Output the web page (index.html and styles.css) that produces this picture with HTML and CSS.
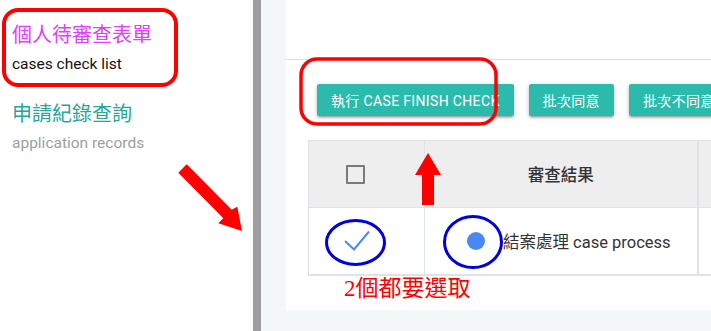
FILE: index.html
```html
<!DOCTYPE html>
<html>
  <head>
    <meta charset="UTF-8">
    <title>個人待審查表單</title>
    <link rel="stylesheet" href="styles.css">
  </head>
  <body>
    <div class="sidebar">
      <div class="nav-item active">
        <div class="nav-title">個人待審查表單</div>
        <div class="nav-sub">cases check list</div>
      </div>
      <div class="nav-item">
        <div class="nav-title">申請紀錄查詢</div>
        <div class="nav-sub">application records</div>
      </div>
    </div>

    <div class="divider"></div>

    <div class="content">
      <div class="card">
        <div class="card-top"></div>

        <div class="toolbar">
          <button class="btn">執行 CASE FINISH CHECK</button>
          <button class="btn">批次同意</button>
          <button class="btn">批次不同意</button>
        </div>

        <table class="table">
          <colgroup>
            <col class="col-check">
            <col class="col-result">
            <col class="col-more">
          </colgroup>
          <thead>
            <tr>
              <th class="cell-check"><span class="checkbox"></span></th>
              <th class="cell-result">審查結果</th>
              <th></th>
            </tr>
          </thead>
          <tbody>
            <tr>
              <td class="cell-check">
                <svg class="check" width="26" height="22" viewBox="0 0 26 22">
                  <polyline points="1,11 10,19.5 25,1.5" />
                </svg>
              </td>
              <td class="cell-result">
                <div class="radio-row">
                  <span class="radio-dot"></span>
                  <span>結案處理 case process</span>
                </div>
              </td>
              <td></td>
            </tr>
          </tbody>
        </table>
      </div>
    </div>

    <!-- annotations drawn over the screenshot -->
    <svg class="marks" width="711" height="331" viewBox="0 0 711 331">
      <rect x="4" y="10" width="172" height="75" rx="14" class="red-line" stroke-width="4" />
      <rect x="301" y="59" width="195" height="65" rx="16" class="red-line" stroke-width="3.5" />
      <ellipse cx="355.5" cy="242.5" rx="29" ry="22" class="blue-line" />
      <ellipse cx="473" cy="242" rx="28.5" ry="25.5" class="blue-line" />
      <polygon class="red-fill" points="428,153 441,175 434,175 434,205 422,205 422,175 415,175" />
      <polygon class="red-fill" points="178.3,172.7 186.7,164.3 231.7,209.8 237.3,206.7 242,231 218.3,223.3 223.3,218.2" />
    </svg>
    <div class="note">2個都要選取</div>
  </body>
</html>
```

FILE: styles.css
```css
:root {
  --teal: #2bbbad;
  --teal-dark: #26a69a;
  --pink: #e040fb;
  --text-color: #333333;
  --border-color: #dfe3e8;
  --bg-color: #f4f7f8;
}

body {
  margin: 0;
  width: 711px;
  height: 331px;
  display: flex;
  overflow: hidden;
  position: relative;
  font-family: Roboto, "Noto Sans CJK TC", sans-serif;
  color: var(--text-color);
  background: #ffffff;
}

.sidebar {
  width: 253px;
  flex-shrink: 0;
  padding: 22px 0 0 12px;
  box-sizing: border-box;
  background: #ffffff;
}

.nav-item {
  margin-bottom: 27px;
}

.nav-title {
  font-size: 20px;
  line-height: 26px;
  color: var(--teal-dark);
}

.nav-sub {
  font-size: 15.5px;
  line-height: 20px;
  margin-top: 6px;
  color: #9e9e9e;
}

.nav-item.active .nav-title {
  color: var(--pink);
}

.nav-item.active .nav-sub {
  color: #111111;
}

.divider {
  width: 8px;
  flex-shrink: 0;
  background: #9e9e9e;
}

.content {
  flex: 1;
  min-width: 0;
  background: var(--bg-color);
  padding: 0 0 21px 25px;
}

.card {
  height: 310px;
  background: #ffffff;
  overflow: hidden;
}

.card-top {
  height: 59px;
  border-bottom: 1px solid #e0e0e0;
}

.toolbar {
  display: flex;
  gap: 15px;
  padding: 24px 0 0 31px;
  white-space: nowrap;
}

.btn {
  flex-shrink: 0;
  height: 32px;
  padding: 0 14px;
  border: none;
  border-radius: 2px;
  background: var(--teal);
  color: #ffffff;
  font-family: Roboto, "Noto Sans CJK TC", sans-serif;
  font-size: 14px;
  letter-spacing: 0.35px;
  box-shadow: 0 2px 2px rgba(0, 0, 0, 0.14), 0 3px 1px -2px rgba(0, 0, 0, 0.12), 0 1px 5px rgba(0, 0, 0, 0.2);
}

.table {
  margin: 24px 0 0 22px;
  border-collapse: collapse;
  table-layout: fixed;
  width: 600px;
}

.col-check {
  width: 116px;
}

.col-result {
  width: 273px;
}

.col-more {
  width: 211px;
}

.table th,
.table td {
  border: 1px solid var(--border-color);
  padding: 0;
}

.table thead tr {
  height: 67px;
  background: #eeeeee;
}

.table tbody tr {
  height: 67px;
  border-bottom: 2px solid var(--border-color);
}

.table th {
  font-size: 16.5px;
  font-weight: 500;
  color: #333333;
}

.cell-result {
  border-right-width: 2px !important;
}

th.cell-check {
  text-align: left;
  padding-left: 37px;
}

.checkbox {
  display: block;
  width: 15px;
  height: 15px;
  border: 2px solid #7a7a7a;
  border-radius: 1px;
}

td.cell-check {
  padding-left: 35px;
}

.check {
  display: block;
  fill: none;
  stroke: #4a8af4;
  stroke-width: 2;
}

.radio-row {
  display: flex;
  align-items: center;
  gap: 18px;
  padding-left: 42px;
  font-size: 16.5px;
  color: #333333;
  white-space: nowrap;
}

.radio-dot {
  width: 18px;
  height: 18px;
  border-radius: 50%;
  background: #4a89f3;
  flex-shrink: 0;
}

.marks {
  position: absolute;
  top: 0;
  left: 0;
  pointer-events: none;
}

.red-line {
  fill: none;
  stroke: #ff0000;
}

.blue-line {
  fill: none;
  stroke: #0000dd;
  stroke-width: 3;
}

.red-fill {
  fill: #ff0000;
}

.note {
  position: absolute;
  left: 344px;
  top: 276px;
  font-family: "Liberation Serif", "Noto Sans CJK TC", serif;
  font-size: 23px;
  line-height: 26px;
  color: #ff0000;
}
```
